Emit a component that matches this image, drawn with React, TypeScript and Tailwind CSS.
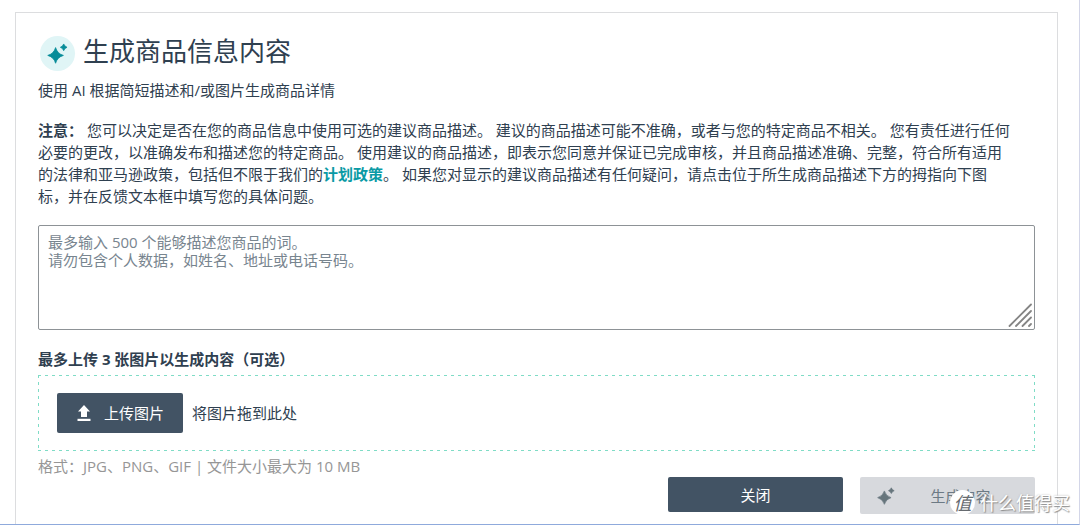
import React from "react";

const NOTE_START =
  "您可以决定是否在您的商品信息中使用可选的建议商品描述。 建议的商品描述可能不准确，或者与您的特定商品不相关。 您有责任进行任何必要的更改，以准确发布和描述您的特定商品。 使用建议的商品描述，即表示您同意并保证已完成审核，并且商品描述准确、完整，符合所有适用的法律和亚马逊政策，包括但不限于我们的";
const NOTE_END =
  "。 如果您对显示的建议商品描述有任何疑问，请点击位于所生成商品描述下方的拇指向下图标，并在反馈文本框中填写您的具体问题。";
const PLACEHOLDER =
  "最多输入 500 个能够描述您商品的词。\n请勿包含个人数据，如姓名、地址或电话号码。";

function Sparkles({ className }: { className: string }) {
  return (
    <svg viewBox="0 0 22 22" className={className} fill="currentColor" aria-hidden="true">
      <path d="M9 4.8 Q10.8 11.2 17.2 13 Q10.8 14.8 9 21.2 Q7.2 14.8 0.8 13 Q7.2 11.2 9 4.8Z" stroke="currentColor" strokeWidth="0.8" strokeLinejoin="round" />
      <path d="M17.5 1 Q18.4 3.6 21 4.5 Q18.4 5.4 17.5 8 Q16.6 5.4 14 4.5 Q16.6 3.6 17.5 1Z" stroke="currentColor" strokeWidth="0.8" strokeLinejoin="round" />
    </svg>
  );
}

function UploadIcon() {
  return (
    <svg viewBox="0 0 16 18" className="h-[18px] w-4" fill="currentColor" aria-hidden="true">
      <path d="M8 1 L14 7.5 H11 V13 H5 V7.5 H2Z" />
      <path d="M1.5 14.8 H14.5 V17 H1.5Z" />
    </svg>
  );
}

function Watermark() {
  return (
    <div className="pointer-events-none absolute right-[9px] bottom-[9px] flex items-center gap-[5px] text-white">
      <span className="flex size-[25px] items-center justify-center rounded-full bg-white text-[18px] leading-none text-[#666b70] italic">
        值
      </span>
      <span className="text-[18px] leading-6 [text-shadow:1px_1px_1px_#8c8c8c,0_0_2px_#b5b5b5]">什么值得买</span>
    </div>
  );
}

export default function App() {
  return (
    <div className="relative flex min-h-screen flex-col border-r border-b border-r-[#d3d6e8] border-b-[#8faadc] bg-white pt-3 pr-[21px] pl-[15px] font-['Open_Sans','Noto_Sans_CJK_SC',sans-serif] text-[15px] leading-[22px] text-[#2f4050]">
      <main className="flex-1 border border-b-0 border-[#dcdddf] px-[22px] pt-[23px]">
        <header className="flex items-center gap-2 pl-0.5">
          <span className="flex size-[35px] items-center justify-center rounded-full bg-[#e0f5f6] text-[#078c99]">
            <Sparkles className="size-[21px]" />
          </span>
          <h1 className="pb-[5px] text-[26px] leading-[30px]">生成商品信息内容</h1>
        </header>
        <p className="mt-2">使用 AI 根据简短描述和/或图片生成商品详情</p>
        <p className="mt-[18px] pr-[22px]">
          <strong>注意：</strong> {NOTE_START}
          <a href="#policy" className="font-bold text-[#0a9aa5]">计划政策</a>
          {NOTE_END}
        </p>

        <div className="relative mt-[18px]">
          <textarea
            aria-label="商品描述"
            placeholder={PLACEHOLDER}
            className="block h-[105px] w-full resize-none rounded-xs border border-[#8d9296] px-[9px] py-[7px] leading-[18px] outline-none placeholder:text-[#78858f]"
          />
          <svg viewBox="0 0 25 25" className="pointer-events-none absolute right-0.5 bottom-0.5 size-[25px]" fill="none" stroke="#858585" strokeWidth="1.8" strokeLinecap="round" aria-hidden="true">
            <path d="M1.5 23 L23 1.5 M8 23 L23 8 M14.5 23 L23 14.5 M21 23 L23 21" />
          </svg>
        </div>

        <h2 className="mt-[18px] font-bold">最多上传 3 张图片以生成内容（可选）</h2>
        <div className="mt-[5px] flex items-center gap-[9px] bg-[image:repeating-linear-gradient(90deg,#7fdcc6_0_3px,transparent_3px_7px),repeating-linear-gradient(90deg,#7fdcc6_0_3px,transparent_3px_7px),repeating-linear-gradient(180deg,#7fdcc6_0_3px,transparent_3px_7px),repeating-linear-gradient(180deg,#7fdcc6_0_3px,transparent_3px_7px)] bg-[length:100%_1px,100%_1px,1px_100%,1px_100%] bg-[position:top,bottom,left,right] bg-no-repeat px-[19px] py-[18px]">
          <button type="button" className="flex h-10 items-center gap-3 rounded-xs bg-[#425364] px-[19px] text-white">
            <UploadIcon />
            上传图片
          </button>
          <span>将图片拖到此处</span>
        </div>
        <p className="mt-1 text-[#969696]">格式：JPG、PNG、GIF | 文件大小最大为 10 MB</p>

        <footer className="flex items-start justify-end gap-[17px]">
          <button type="button" className="h-[35px] w-[175px] rounded-xs bg-[#425364] text-white">关闭</button>
          <button type="button" disabled className="flex h-[37px] w-[175px] items-center rounded-xs bg-[#d7d9dd] px-[17px] text-[#6c7a84]">
            <Sparkles className="size-[18px] text-[#66757c]" />
            <span className="flex-1 pl-2 text-center">生成内容</span>
          </button>
        </footer>
      </main>
      <Watermark />
    </div>
  );
}
